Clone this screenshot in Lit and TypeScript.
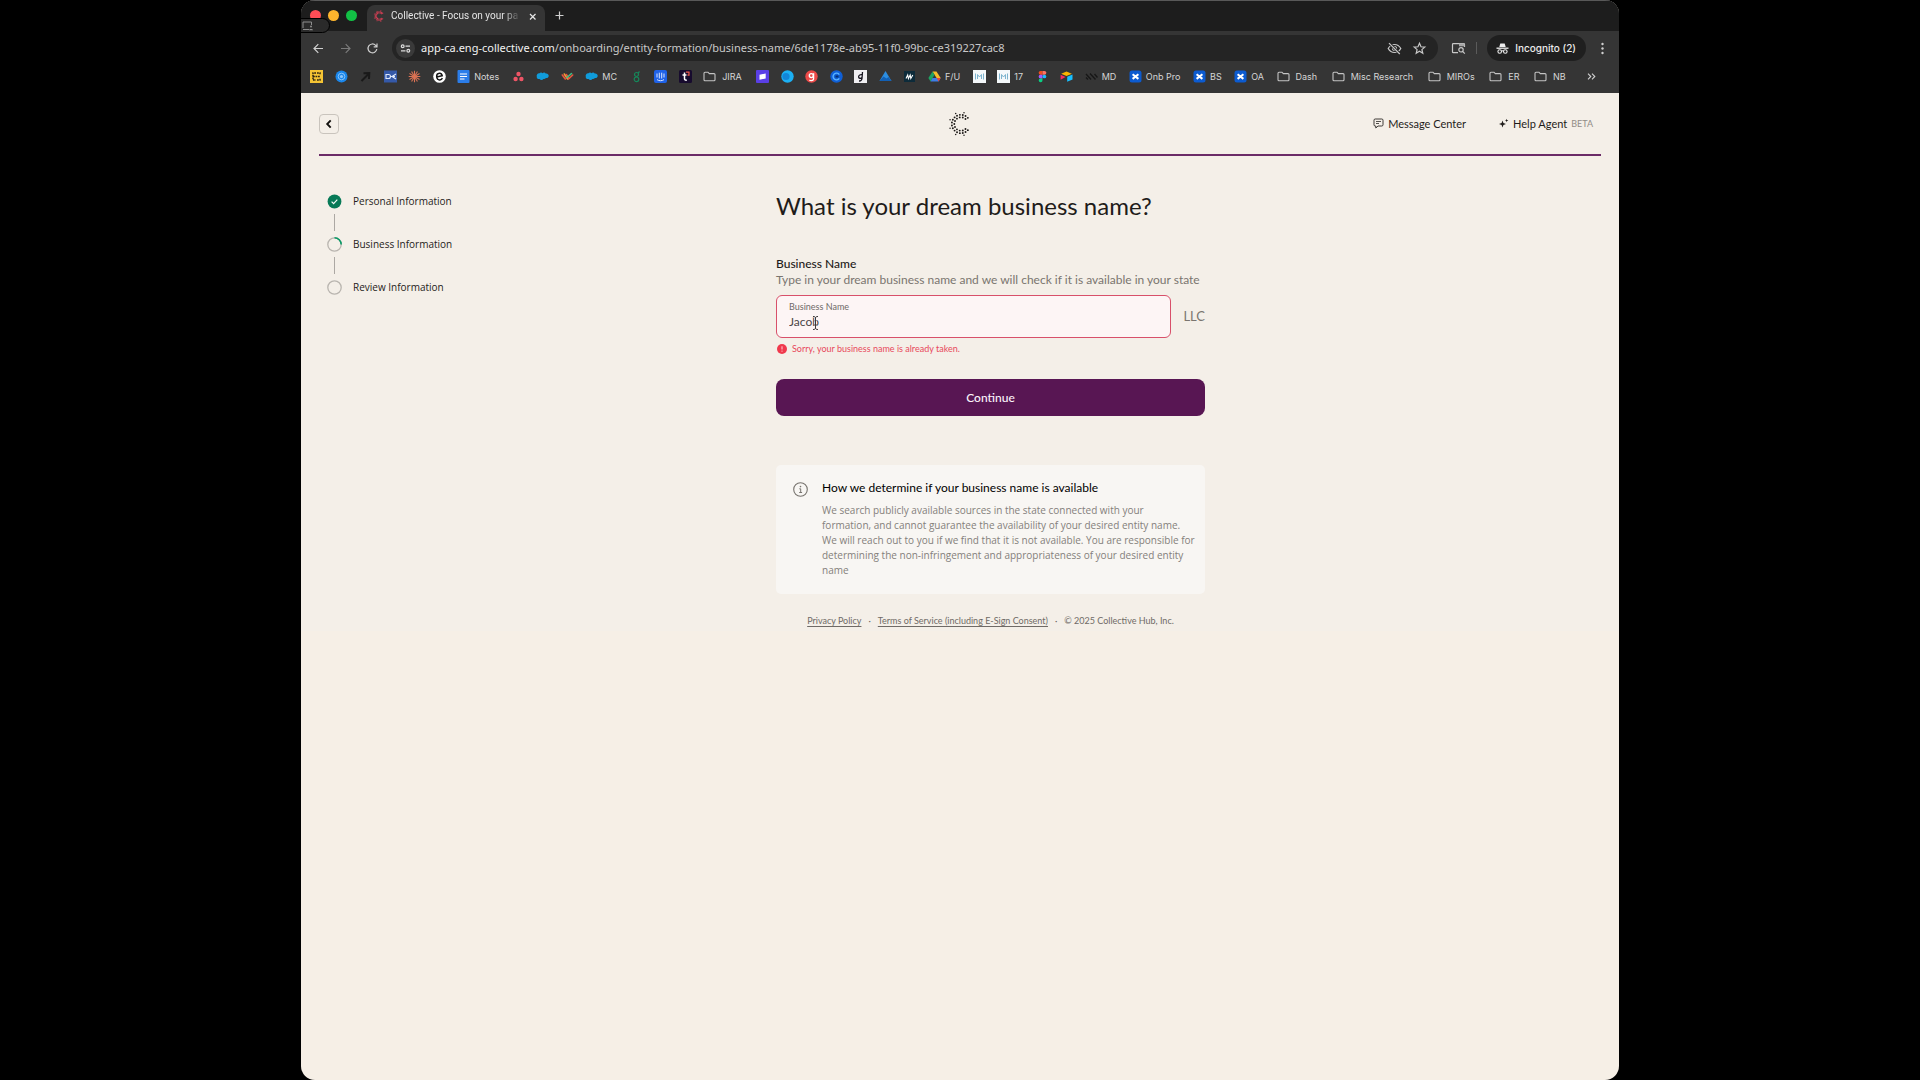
import { LitElement, html, css, svg, nothing, type TemplateResult, type SVGTemplateResult } from "lit";
import { customElement, property, state } from "lit/decorators.js";
import { classMap } from "lit/directives/class-map.js";

type Glyph = SVGTemplateResult;

const draw = (size: number, body: Glyph) => html`<svg
  class="glyph"
  width=${size}
  height=${size}
  viewBox="0 0 ${size} ${size}"
  fill="none"
  aria-hidden="true"
>${body}</svg>`;

const folder = svg`<path d="M1 3.2c0-.6.4-1 1-1h3l1.300 1.400H11c.6 0 1 .4 1 1v5.200c0 .6-.4 1-1 1H2c-.6 0-1-.4-1-1z" stroke="#c4c4c4" stroke-width="1.100"/>`;
const confluence = svg`<rect x=".5" y=".5" width="12" height="12" rx="2.500" fill="#0c5bd0"/><path d="M3.600 4.300 9.400 8.900M9.400 4.300 3.600 8.900" stroke="#fff" stroke-width="2"/>`;
const cloud = svg`<path d="M3.500 3.200c1-1 2.300-.8 3 0 1-1 2.600-.8 3.200.3 1.600-.4 3 .7 3 2.200s-1.400 2.600-2.800 2.300c-.6 1-1.700 1.300-2.600.9-.7 1.500-3 1.500-3.700.1C1.600 9.300.4 8 .8 6.700.2 5.200 1.300 3 3.500 3.200z" fill="#109cdb"/>`;
const mBox = svg`<rect width="13" height="13" fill="#f4f8fa"/><path d="M2.500 3.500v6M10.500 3.500v6M4.500 9V4.500l2 2.500 2-2.500V9" stroke="#7db4cf" stroke-width="1"/>`;

const rays = Array.from({ length: 12 }, (_, i) => {
  const a = (i * Math.PI) / 6;
  return svg`<path d="M6.500 6.500 ${(6.5 + 5.8 * Math.cos(a)).toFixed(1)} ${(6.5 + 5.8 * Math.sin(a)).toFixed(1)}"/>`;
});

interface Bookmark { name: string; label?: string; icon: Glyph; folder?: boolean }

const bookmarks: Bookmark[] = [
  { name: "Grid", icon: svg`<rect width="13" height="13" fill="#f5c434"/><path d="M6 3H3v7h3M7 3h3v2M7 10h3V8M3 6.500h7" stroke="#2b2412" stroke-width="1.500" stroke-dasharray="1.800 .7"/>` },
  { name: "Orbit", icon: svg`<circle cx="6.500" cy="6.500" r="6" fill="#1a86ea"/><circle cx="6.500" cy="6.500" r="3.300" stroke="#9fd2fb" stroke-width=".8"/><circle cx="6.500" cy="6.500" r="1.600" fill="#8cc6fa"/>` },
  { name: "Arrow", icon: svg`<path d="M2.500 11 10 3.500M4.500 3.200 10.300 3 10 9" stroke="#191919" stroke-width="2"/>` },
  { name: "Key", icon: svg`<rect y=".5" width="13" height="12" fill="#3559a8"/><path d="M2 4.500h2.500a2 2 0 0 1 0 4H2zM12 4 8 6.500 12 9M6 6.500h5" stroke="#dfe8fa" stroke-width="1.100"/>` },
  { name: "Burst", icon: svg`<g stroke="#db7254" stroke-width="1.100">${rays}</g>` },
  { name: "e", icon: svg`<circle cx="6.500" cy="6.500" r="6.300" fill="#fff"/><path d="M3.700 7 9.200 5.700C8.800 3.900 7.500 3 6.200 3.200 4.500 3.400 3.500 5 3.700 7c.3 2 1.700 3 3.200 2.900 1.100-.1 2-.8 2.500-1.700" stroke="#151515" stroke-width="1.500"/>` },
  { name: "Notes", label: "Notes", icon: svg`<rect x=".5" width="12" height="13" rx="1" fill="#2b7de9"/><path d="M3 4h7M3 6.500h7M3 9h4.500" stroke="#fff" stroke-width="1.200"/>` },
  { name: "Dots", icon: svg`<g fill="#ee5566"><circle cx="6.500" cy="4" r="2.200"/><circle cx="3.600" cy="9" r="2.200"/><circle cx="9.400" cy="9" r="2.200"/></g>` },
  { name: "Cloud", icon: cloud },
  { name: "Weave", icon: svg`<g stroke-width="1.600" stroke-linecap="round"><path d="M1.300 5 4.300 9" stroke="#e8573f"/><path d="M3.300 4 6.600 9" stroke="#f29c38"/><path d="M5.300 4.500 8 8" stroke="#e8573f"/><path d="M7.500 9 11.700 5" stroke="#e8573f"/><path d="M6 7.500 10.500 3.500" stroke="#3fbf86"/></g>` },
  { name: "MC", label: "MC", icon: cloud },
  { name: "Loop", icon: svg`<g stroke="#16875a" stroke-width="1.200"><circle cx="6.500" cy="4.500" r="2"/><circle cx="6.500" cy="9.300" r="2.300"/><path d="M8 3.200 9.500 1.500"/></g>` },
  { name: "Intercom", icon: svg`<rect width="13" height="13" rx="2" fill="#1f62e8"/><path d="M3 3.500v4M5.300 2.700v5.800M7.700 2.700v5.800M10 3.500v4M3 9.600c2 1.500 5 1.500 7 0" stroke="#dce8ff" stroke-width="1"/>` },
  { name: "t", icon: svg`<rect width="13" height="13" rx="1.500" fill="#170b2e"/><path d="M5.500 2.500v6c0 1.300.8 1.800 2.300 1.600M3.500 5h4" stroke="#fff" stroke-width="1.500"/><path d="M7 2.200h3v3H8.500" stroke="#ee5a4e" stroke-width="1.200"/>` },
  { name: "JIRA", label: "JIRA", icon: folder, folder: true },
  { name: "Flag", icon: svg`<rect width="13" height="13" rx="1" fill="#5a3fe6"/><path d="m3.500 4.800 6.200-1.300v5l-6.200 1.300z" fill="#fff"/>` },
  { name: "Sphere", icon: svg`<circle cx="6.500" cy="6.500" r="6.200" fill="#1cb0f4"/><circle cx="5" cy="6.500" r="3.600" fill="#1286d8"/>` },
  { name: "g", icon: svg`<circle cx="6.500" cy="6.500" r="6.200" fill="#ec4a48"/><circle cx="6.300" cy="5.600" r="2" stroke="#fff" stroke-width="1.400"/><path d="M8.600 3.300v5.300c0 1.300-1 2-2.200 2-.9 0-1.600-.3-2-.8" stroke="#fff" stroke-width="1.300"/>` },
  { name: "C", icon: svg`<circle cx="6.500" cy="6.500" r="6.200" fill="#0f5fd6"/><path d="M9.300 4.600a3.400 3.400 0 1 0 0 3.800" stroke="#59b4ff" stroke-width="1.400"/><path d="M5.500 6.500h3" stroke="#07306f" stroke-width="2"/>` },
  { name: "d", icon: svg`<rect width="13" height="13" fill="#f0eff2"/><path d="M8.500 2 8 8.500c-.2 1.800-1.500 2.600-3 2.500M8.300 4.800c-2-.6-3.600.4-3.700 2s1.900 2 3.300.8" stroke="#17151f" stroke-width="1.300"/>` },
  { name: "Peak", icon: svg`<path d="M6.500 1 12.500 11H.5z" fill="#2c8de0"/><path d="m.5 11 4-4.500 3 2 2-1.500 3 4z" fill="#1260b5"/>` },
  { name: "Wave", icon: svg`<rect x="1" y="1" width="11" height="11" fill="#0d2b3a"/><path d="m3 8.500 1.700-3.500.7 3.500L7.200 5l.6 3.500L9.800 5" stroke="#fff" stroke-width="1.100"/>` },
  { name: "F/U", label: "F/U", icon: svg`<path d="M4.500 1.500h4L12.700 8H8.600z" fill="#f6bb2a"/><path d="M4.500 1.500 6.500 4.800 2.500 11.500.4 8z" fill="#1ea362"/><path d="M4.500 8h8.200l-2.100 3.500H2.500z" fill="#3d7fe8"/><path d="M8.600 8h4.100l-2.100 3.500z" fill="#e5463a"/>` },
  { name: "M board", icon: mBox },
  { name: "17", label: "17", icon: mBox },
  { name: "Figma", icon: svg`<path d="M4.500 1h2v3.700h-2a1.850 1.850 0 0 1 0-3.700z" fill="#f24e1e"/><path d="M6.500 1h2a1.850 1.850 0 0 1 0 3.700h-2z" fill="#ff7262"/><path d="M4.500 4.700h2v3.700h-2a1.850 1.850 0 0 1 0-3.700z" fill="#a259ff"/><circle cx="8.400" cy="6.500" r="1.850" fill="#1abcfe"/><path d="M4.500 8.400h2v1.800a1.900 1.900 0 1 1-2-1.800z" fill="#0acf83"/>` },
  { name: "Airtable", icon: svg`<path d="m6.500 1.500 5.300 2.200-5.300 2.200-5.300-2.200z" fill="#fcb400"/><path d="m7.200 6.800 5.300-2.200v5L7.200 11.800z" fill="#18bfff"/><path d="m.6 4.800 5 2.200-5 2.800z" fill="#f82b60"/>` },
  { name: "MD", label: "MD", icon: svg`<path d="m1 4 5 5.500M5 3.500l5.500 6M9.500 4l3 3.500M1 7.500l2 2" stroke="#171717" stroke-width="1.400"/>` },
  { name: "Onb Pro", label: "Onb Pro", icon: confluence },
  { name: "BS", label: "BS", icon: confluence },
  { name: "OA", label: "OA", icon: confluence },
  { name: "Dash", label: "Dash", icon: folder, folder: true },
  { name: "Misc Research", label: "Misc Research", icon: folder, folder: true },
  { name: "MIROs", label: "MIROs", icon: folder, folder: true },
  { name: "ER", label: "ER", icon: folder, folder: true },
  { name: "NB", label: "NB", icon: folder, folder: true },
];

/** Dots on one ring of the brand mark, leaving its mouth open to the right. */
const ring = (radius: number, dot: number, from: number, step: number, count: number) =>
  Array.from({ length: count }, (_, i) => {
    const a = ((from + i * step) * Math.PI) / 180;
    return svg`<circle cx=${(14 + radius * Math.cos(a)).toFixed(2)} cy=${(13 - radius * Math.sin(a)).toFixed(2)} r=${dot} fill="currentColor"/>`;
  });

const mark = (size: number, weight = 1) => html`<svg class="mark" width=${size} height=${size} viewBox="0 0 26 26" aria-hidden="true">
  ${ring(11.7, 0.75 * weight, 75, 42, 6)}${ring(9.2, 0.95 * weight, 42, 18.4, 16)}${ring(6.7, 0.95 * weight, 48, 26.4, 11)}
</svg>`;

@customElement("browser-chrome")
export class BrowserChrome extends LitElement {
  static styles = css`
    :host { display: block; background: #353535; font-family: Inter, "Liberation Sans", sans-serif; color: #d6d6d6; }
    button, a { font: inherit; color: inherit; background: none; border: 0; padding: 0; margin: 0; text-decoration: none; }
    button { display: flex; align-items: center; justify-content: center; }
    .glyph, .mark { display: block; flex: none; }
    .strip { display: flex; align-items: flex-end; height: 31px; box-sizing: border-box; border-top: 1px solid #595959; background: #1d1d1d; }
    .lights { display: flex; gap: 7px; padding: 0 10px 10px 9px; }
    .light { width: 11px; height: 11px; border-radius: 50%; }
    .red { background: #ff4d56; }
    .amber { background: #fdb52d; }
    .green { background: #12c045; }
    .tab { display: flex; align-items: center; width: 178px; height: 26px; box-sizing: border-box; padding: 0 7px 4px 6px; gap: 6px; border-radius: 8px 8px 0 0; background: #353535; font-size: 9px; line-height: 12px; }
    .tab .mark { color: #d63f55; }
    .title { flex: 1; white-space: nowrap; font-family: Roboto, Inter, sans-serif; font-size: 10px; color: #e4e4e4; mask-image: linear-gradient(90deg, #000 86%, transparent); }
    .new { padding: 0 0 9px 8px; }
    .tools { display: flex; align-items: center; height: 34px; }
    .nav { display: flex; align-items: center; gap: 12px; padding: 0 12px 0 10px; }
    .address { flex: 1; display: flex; align-items: center; height: 26px; box-sizing: border-box; padding: 0 11px 0 4px; gap: 6px; border-radius: 13px; background: #242424; }
    .site { width: 19px; height: 19px; border-radius: 50%; background: #3a3a3a; }
    .url { flex: 1; min-width: 0; font: 11px/16px "Noto Sans", sans-serif; color: #c9c9c9; white-space: nowrap; }
    .host { color: #f2f2f2; }
    .ends { display: flex; gap: 10px; }
    .side { display: flex; align-items: center; padding: 0 10px 0 13px; gap: 10px; }
    .rule { width: 1px; height: 12px; background: #5b5b5b; }
    .incognito { height: 26px; padding: 0 10px 0 8px; gap: 5px; border-radius: 13px; background: #1f1f1f; font-size: 10px; font-weight: 500; color: #ececec; }
    .marks { display: flex; align-items: center; height: 28px; box-sizing: border-box; padding: 0 23px 5px 9px; font-size: 9px; line-height: 12px; }
    .list { flex: 1; display: flex; justify-content: space-between; list-style: none; margin: 0; padding: 0 18px 0 0; }
    .bookmark { display: flex; align-items: center; gap: 4px; white-space: nowrap; }
    .labelled { padding-right: 1px; }
    .folder { gap: 6px; padding-right: 3px; }
  `;

  render() {
    return html`
      <div class="strip">
        <div class="lights">
          <span class="light red"></span><span class="light amber"></span><span class="light green"></span>
        </div>
        <div class="tab">
          ${mark(12, 1.5)}
          <span class="title">Collective - Focus on your pa</span>
          <button aria-label="Close tab">${draw(11, svg`<path d="m3 3 5.500 5.500M8.500 3 3 8.500" stroke="#e8e8e8" stroke-width="1.200"/>`)}</button>
        </div>
        <button class="new" aria-label="New tab">${draw(13, svg`<path d="M6.500 2.500v8M2.500 6.500h8" stroke="#d0d0d0" stroke-width="1.200"/>`)}</button>
      </div>
      <div class="tools">
        <div class="nav">
          <button aria-label="Back">${draw(15, svg`<path d="M12 7.500H3M7.300 3.200 3 7.500l4.300 4.300" stroke="#d0d0d0" stroke-width="1.200"/>`)}</button>
          <button aria-label="Forward">${draw(15, svg`<path d="M3 7.500h9M7.700 3.200 12 7.500l-4.300 4.300" stroke="#7a7a7a" stroke-width="1.200"/>`)}</button>
          <button aria-label="Reload">${draw(15, svg`<path d="M11.800 8A4.400 4.400 0 1 1 10.600 4.300L12 5.700M12 2.500v3.300H8.700" stroke="#d0d0d0" stroke-width="1.200"/>`)}</button>
        </div>
        <div class="address">
          <button class="site" aria-label="Site information">${draw(11, svg`<g stroke="#dcdcdc" stroke-width="1.200"><circle cx="2.700" cy="3.200" r="1.400"/><path d="M5.500 3.200h4.500M1 7.800h4.500"/><circle cx="8.300" cy="7.800" r="1.400"/></g>`)}</button>
          <div class="url"><span class="host">app-ca.eng-collective.com</span>/onboarding/entity-formation/business-name/6de1178e-ab95-11f0-99bc-ce319227cac8</div>
          <div class="ends">
            <button aria-label="Third-party cookies blocked">${draw(15, svg`<path d="M1.200 7.500C2.600 5 4.900 3.500 7.500 3.500s4.900 1.500 6.300 4c-1.400 2.500-3.700 4-6.300 4s-4.900-1.500-6.300-4z" stroke="#c8c8c8" stroke-width="1.200"/><circle cx="7.500" cy="7.500" r="2" stroke="#c8c8c8" stroke-width="1.200"/><path d="m2.500 2.500 10.500 10.500" stroke="#242424" stroke-width="2.800"/><path d="m2 2.200 10.800 10.800" stroke="#c8c8c8" stroke-width="1.200"/>`)}</button>
            <button aria-label="Bookmark this page">${draw(15, svg`<path d="m7.500 2.300 1.500 3.500 3.800.3L9.900 8.600l.9 3.700-3.300-2-3.300 2 .9-3.700-2.900-2.500 3.800-.3z" stroke="#c8c8c8" stroke-width="1.200"/>`)}</button>
          </div>
        </div>
        <div class="side">
          <button aria-label="Search this page">${draw(15, svg`<path d="M7 11.700H2.300c-.5 0-.8-.3-.8-.8V3.400c0-.5.3-.8.8-.8h10.400c.5 0 .8.3.8.8V6" stroke="#c8c8c8" stroke-width="1.200"/><path d="M8 2.500h5.500v2.800H8z" fill="#a6a6a6"/><circle cx="10" cy="8.800" r="2.200" stroke="#c8c8c8" stroke-width="1.200"/><path d="m11.600 10.400 2.200 2.200" stroke="#c8c8c8" stroke-width="1.300"/>`)}</button>
          <span class="rule"></span>
          <button class="incognito">${draw(15, svg`<path d="M4.300 6 5.300 2.500h4.400l1 3.500z" fill="#eee"/><path d="M1.500 7.200h12" stroke="#eee" stroke-width="1.300"/><g stroke="#eee" stroke-width="1.100"><circle cx="4.700" cy="10.500" r="1.800"/><circle cx="10.300" cy="10.500" r="1.800"/><path d="M6.500 10.200c.6-.5 1.400-.5 2 0"/></g>`)}Incognito (2)</button>
          <button aria-label="Menu">${draw(13, svg`<g fill="#d0d0d0"><circle cx="6.500" cy="2" r="1.200"/><circle cx="6.500" cy="6.500" r="1.200"/><circle cx="6.500" cy="11" r="1.200"/></g>`)}</button>
        </div>
      </div>
      <nav class="marks" aria-label="Bookmarks">
        <ul class="list">
          ${bookmarks.map((b) => html`<li><a class=${classMap({ bookmark: true, labelled: !!b.label, folder: !!b.folder })} href="#" aria-label=${b.name}>${draw(13, b.icon)}${b.label ?? nothing}</a></li>`)}
        </ul>
        <button aria-label="More bookmarks">${draw(9, svg`<path d="m1 1.700 2.800 2.800L1 7.300M5 1.700l2.800 2.800L5 7.300" stroke="#d0d0d0" stroke-width="1.100"/>`)}</button>
      </nav>
    `;
  }
}

type StepState = "done" | "current" | "todo";

@customElement("step-list")
export class StepList extends LitElement {
  static styles = css`
    :host { display: block; }
    .steps { list-style: none; margin: 0; padding: 0 0 0 8px; font: 10px/16px "Open Sans", "Noto Sans", sans-serif; color: #1f1c1a; }
    .step { display: flex; align-items: center; gap: 11px; height: 16px; }
    .step + .step { margin-top: 27px; position: relative; }
    .step + .step::before { content: ""; position: absolute; left: 7px; top: -22px; width: 1px; height: 17px; background: #aca8a3; }
    .glyph { display: block; flex: none; }
  `;

  @property({ attribute: false }) steps: { label: string; state: StepState }[] = [];

  private badge(s: StepState): TemplateResult {
    if (s === "done") return draw(15, svg`<circle cx="7.500" cy="7.500" r="6.900" fill="#077a57"/><path d="m4.600 7.700 2 2 3.700-4" stroke="#f2fbf7" stroke-width="1.200"/>`);
    return draw(15, svg`<circle cx="7.500" cy="7.500" r="6.700" stroke="#b9b5af" stroke-width="1.300"/>${s === "current" ? svg`<path d="M7.500.8a6.700 6.700 0 0 1 6.700 6.700" stroke="#0b9a67" stroke-width="1.600"/>` : nothing}`);
  }

  render() {
    return html`<ol class="steps">${this.steps.map((s) => html`<li class="step">${this.badge(s.state)}${s.label}</li>`)}</ol>`;
  }
}

@customElement("business-name-form")
export class BusinessNameForm extends LitElement {
  static styles = css`
    :host { display: block; color: #1f1c1a; font: 12px/16px Lato, "Open Sans", sans-serif; }
    h1, h2, p { margin: 0; }
    h1 { font-size: 24px; line-height: 32px; font-weight: 400; }
    h2 { font-size: 12px; line-height: 16px; font-weight: 400; color: #000; }
    .intro { padding-top: 34px; }
    .caption { font-weight: 500; display: block; }
    .muted { color: #7a756f; }
    .row { display: flex; align-items: center; gap: 12px; padding-top: 7px; color: #7a756f; }
    .suffix { font-size: 13px; padding-bottom: 2px; }
    .field { position: relative; flex: 1; min-width: 0; display: flex; flex-direction: column; height: 43px; box-sizing: border-box; padding: 5px 12px; border: 1px solid #d8506a; border-radius: 6px; background: #fdf5f5; }
    .hint { font-size: 9px; line-height: 12px; color: #6f6a68; }
    .value { border: 0; outline: 0; margin: 0; padding: 0; background: none; font: 400 12px/18px Lato, sans-serif; color: #4a4546; width: 100%; }
    .pointer { position: absolute; left: 34px; top: 19px; }
    .error { display: flex; align-items: center; gap: 5px; padding: 5px 0 0 1px; font-size: 9px; line-height: 12px; color: #e8495c; }
    .glyph { display: block; flex: none; }
    .submit { display: block; width: 100%; height: 37px; margin-top: 24px; border: 0; border-radius: 8px; background: #581653; color: #fbf4fb; font: 500 12px/16px Lato, sans-serif; }
    .note { display: flex; align-items: flex-start; gap: 14px; margin-top: 49px; padding: 15px 8px 16px 17px; border-radius: 5px; background: #f8f6f3; }
    .note .glyph { margin-top: 2px; }
    .note p { padding-top: 7px; font: 10px/15px "Open Sans", "Noto Sans", sans-serif; color: #84807b; }
    .legal { display: flex; justify-content: center; gap: 7px; padding-top: 20px; font-size: 9px; line-height: 14px; color: #6f6a66; }
    .legal a { color: inherit; text-underline-offset: 2px; }
  `;

  @state() private name = "Jacob";

  render() {
    return html`
      <h1>What is your dream business name?</h1>
      <div class="intro">
        <span class="caption">Business Name</span>
        <p class="muted">Type in your dream business name and we will check if it is available in your state</p>
      </div>
      <div class="row">
        <div class="field">
          <label class="hint" for="business-name">Business Name</label>
          <input
            class="value"
            id="business-name"
            type="text"
            autocomplete="off"
            spellcheck="false"
            aria-invalid="true"
            aria-describedby="name-error"
            .value=${this.name}
            @input=${(e: Event) => (this.name = (e.target as HTMLInputElement).value)}
          />
          <svg class="pointer" width="9" height="16" viewBox="0 0 9 16" fill="none" aria-hidden="true">
            <path d="M2 1.500c1.500 0 2.500.3 2.500 1.500v10c0 1.200-1 1.500-2.500 1.500M7 1.500c-1.500 0-2.500.3-2.500 1.500v10c0 1.200 1 1.500 2.500 1.500M3 10h3" stroke="#fdf5f5" stroke-width="1.800"/>
            <path d="M2 1.500c1.500 0 2.500.3 2.500 1.500v10c0 1.200-1 1.500-2.500 1.500M7 1.500c-1.500 0-2.500.3-2.500 1.500v10c0 1.200 1 1.500 2.500 1.500M3 10h3" stroke="#3c3839" stroke-width="1"/>
          </svg>
        </div>
        <span class="suffix">LLC</span>
      </div>
      <div class="error" id="name-error">
        ${draw(10, svg`<circle cx="5" cy="5" r="5" fill="#f0384c"/><path d="M5 2.300v3.200M5 6.600v1.100" stroke="#ffd3d6" stroke-width="1"/>`)}
        Sorry, your business name is already taken.
      </div>
      <button class="submit">Continue</button>
      <section class="note">
        ${draw(15, svg`<circle cx="7.500" cy="7.500" r="6.800" stroke="#77736e" stroke-width="1.100"/><path d="M6.300 6.800h1.400v3.600M6.200 10.500h2.900" stroke="#77736e" stroke-width="1"/><circle cx="7.500" cy="4.600" r=".8" fill="#77736e"/>`)}
        <div>
          <h2>How we determine if your business name is available</h2>
          <p>
            We search publicly available sources in the state connected with your<br />formation, and cannot guarantee
            the availability of your desired entity name.<br />We will reach out to you if we find that it is not
            available. You are responsible for<br />determining the non-infringement and appropriateness of your
            desired entity<br />name
          </p>
        </div>
      </section>
      <footer class="legal">
        <a href="#">Privacy Policy</a><span>·</span><a href="#">Terms of Service (including E-Sign Consent)</a><span>·</span><span>© 2025 Collective Hub, Inc.</span>
      </footer>
    `;
  }
}

@customElement("app-root")
export class AppRoot extends LitElement {
  static styles = css`
    :host { display: flex; flex-direction: column; min-height: 100vh; box-sizing: border-box; padding: 0 calc(100vw * 301 / 1920); background: #000; }
    .window { position: relative; flex: 1; display: flex; flex-direction: column; overflow: hidden; border-radius: 14px; background: #f6efe6; }
    .share { position: absolute; left: -12px; top: 18px; width: 41px; height: 15px; box-sizing: border-box; padding-left: 12px; display: flex; align-items: center; border: 1px solid #000; border-radius: 8px; background: #2a2a2a; }
    .page { padding: 0 18px 3px; background: #f4efe8; }
    .bar { display: grid; grid-template-columns: 1fr auto 1fr; align-items: center; height: 63px; box-sizing: border-box; border-bottom: 2px solid #6b2b67; color: #1f1c1a; font: 11px/16px Lato, "Open Sans", sans-serif; }
    .back { width: 20px; height: 20px; display: flex; align-items: center; justify-content: center; padding: 0; border: 1px solid #c9c4bd; border-radius: 4px; background: none; }
    .brand { color: #1c1917; display: block; }
    .mark, .glyph { display: block; flex: none; }
    .links { display: flex; justify-content: flex-end; gap: 32px; padding-right: 8px; }
    .link { display: flex; align-items: center; gap: 4px; color: inherit; text-decoration: none; }
    .beta { font-size: 9px; color: #918c86; }
    .body { display: grid; grid-template-columns: minmax(0, 457fr) minmax(0, 429fr) minmax(0, 396fr); padding-top: 34px; }
    .aside { padding-top: 3px; }
  `;

  private steps = [
    { label: "Personal Information", state: "done" },
    { label: "Business Information", state: "current" },
    { label: "Review Information", state: "todo" },
  ];

  render() {
    return html`
      <div class="window">
        <browser-chrome></browser-chrome>
        <div class="share">${draw(11, svg`<path d="M1 8V2h8.500v3M1 9.500h6" stroke="#8d8d8d" stroke-width="1"/><circle cx="9" cy="6.500" r="1" fill="#8d8d8d"/><path d="M7 10.300c0-1.600 4-1.600 4 0z" fill="#8d8d8d"/>`)}</div>
        <div class="page">
          <header class="bar">
            <button class="back" aria-label="Go back">${draw(10, svg`<path d="M6.700 1.300 3.200 5l3.500 3.700" stroke="#141210" stroke-width="1.900"/>`)}</button>
            <a class="brand" href="#" aria-label="Collective">${mark(26)}</a>
            <nav class="links">
              <a class="link" href="#">${draw(11, svg`<path d="M2.200 1h6.600C9.600 1 10 1.400 10 2.200v4.600C10 7.600 9.600 8 8.800 8H5L2.800 10V8h-.6C1.400 8 1 7.600 1 6.800V2.200C1 1.400 1.400 1 2.200 1z" stroke="#2a2725" stroke-width=".9"/><path d="M3 3.500h5M3 5.500h3" stroke="#2a2725" stroke-width=".8"/>`)}Message Center</a>
              <a class="link" href="#">${draw(11, svg`<path d="M4.500 2.500 5.400 5.100 8 6 5.400 6.900 4.500 9.500 3.600 6.900 1 6l2.600-.9zM8.700.8l.4 1.300 1.300.4-1.300.5-.4 1.300-.5-1.300-1.200-.5 1.200-.4z" fill="#1f1c1a"/>`)}Help Agent<span class="beta">BETA</span></a>
            </nav>
          </header>
          <div class="body">
            <aside class="aside"><step-list .steps=${this.steps}></step-list></aside>
            <main><business-name-form></business-name-form></main>
          </div>
        </div>
      </div>
    `;
  }
}
